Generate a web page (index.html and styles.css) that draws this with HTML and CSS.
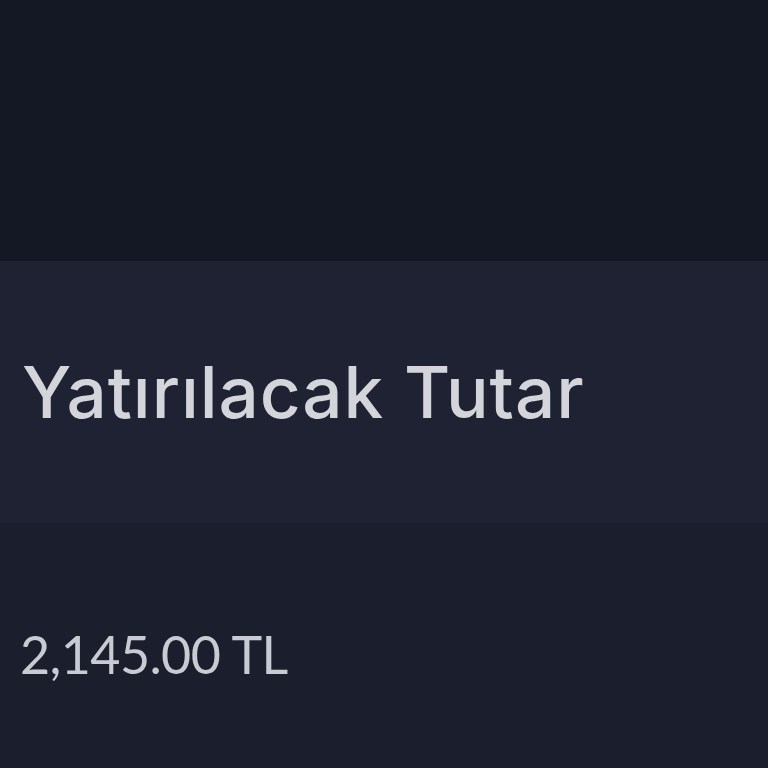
FILE: index.html
```html
<!DOCTYPE html>
<html lang="tr">
<head>
  <meta charset="UTF-8">
  <meta name="viewport" content="width=device-width, initial-scale=1.0">
  <title>Yatırım</title>
  <link rel="stylesheet" href="styles.css">
</head>
<body>
  <div class="page">
    <div class="topbar"></div>
    <div class="section-head">
      <h2>Yatırılacak Tutar</h2>
    </div>
    <div class="amount-box">
      <span class="amount">2,145.00 TL</span>
    </div>
  </div>
</body>
</html>
```
FILE: styles.css
```css
body {
  margin: 0;
  padding: 0;
  background-color: #1b1e2c;
}
.page {
  display: flex;
  flex-direction: column;
  height: 768px;
}
.topbar {
  height: 261px;
  background-color: #141824;
}
.section-head {
  height: 262px;
  background-color: #1e2232;
  display: flex;
  align-items: center;
  padding-left: 22px;
}
.section-head h2 {
  margin: 0;
  font-family: Inter, "DejaVu Sans", sans-serif;
  font-weight: 500;
  font-size: 71px;
  color: #d3d5db;
  letter-spacing: 0.9px;
}
.amount-box {
  flex: 1;
  background-color: #1b1e2c;
  padding: 100px 0 0 20px;
}
.amount {
  font-family: Lato, "Liberation Sans", sans-serif;
  font-size: 52px;
  color: #c9cbd3;
  letter-spacing: -0.6px;
}
```
